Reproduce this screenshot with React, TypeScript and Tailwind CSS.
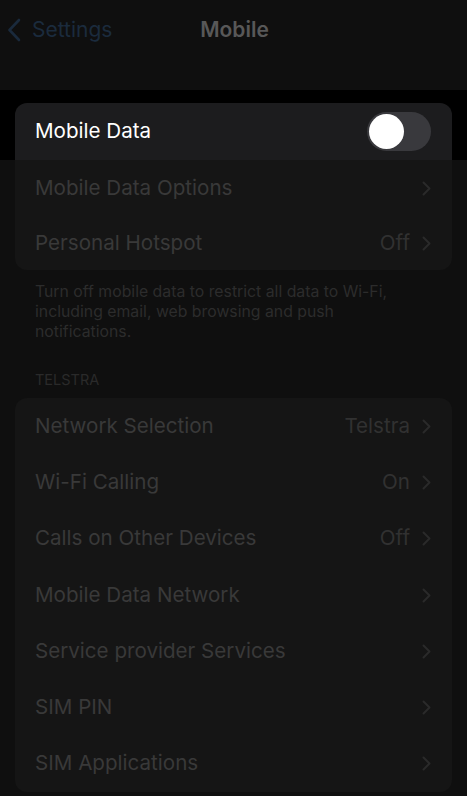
import React from "react";

const font = { fontFamily: 'Inter, "Noto Sans", "Liberation Sans", sans-serif' };

function Chevron({ color = "#2a2a2a" }: { color?: string }) {
  return (
    <svg width="9" height="15" viewBox="0 0 9 15" fill="none">
      <path d="M1.5 1.5 L7.5 7.5 L1.5 13.5" stroke={color} strokeWidth="2" strokeLinecap="round" strokeLinejoin="round" />
    </svg>
  );
}

function Row({ title, value }: { title: string; value?: string }) {
  return (
    <div className="flex h-[56.3px] items-center pl-[20px] pr-[21px]">
      <span className="flex-1 text-[20.6px] text-[#393939]">{title}</span>
      {value && <span className="mr-[12px] text-[20.6px] text-[#313131]">{value}</span>}
      <Chevron />
    </div>
  );
}

export default function App() {
  return (
    <div className="min-h-screen bg-[#0f0f0f]" style={font}>
      <header className="relative flex h-[90px] items-start bg-[#0f0f0f]">
        <div className="flex h-[60px] items-center pl-[7px]">
          <svg width="14" height="24" viewBox="0 0 14 24" fill="none">
            <path d="M12 2 L2.5 12 L12 22" stroke="#1a2a3c" strokeWidth="2.6" strokeLinecap="round" strokeLinejoin="round" />
          </svg>
          <span className="ml-[11px] text-[21px] text-[#1b2b3d]">Settings</span>
        </div>
        <div className="absolute left-0 right-0 top-0 flex h-[60px] items-center justify-center">
          <span className="ml-[2px] text-[21px] font-semibold text-[#585858]">Mobile</span>
        </div>
      </header>
      <div className="bg-black px-[15px] pt-[13px]">
        <div className="flex h-[57px] items-center justify-between rounded-t-[12px] bg-[#1c1c1e] pl-[20px] pr-[21px]">
          <span className="text-[20.6px] text-white">Mobile Data</span>
          <div className="flex h-[39px] w-[64px] items-center rounded-full bg-[#39393d] p-[2px]">
            <div className="h-[35px] w-[35px] rounded-full bg-white" />
          </div>
        </div>
      </div>
      <div className="px-[15px]">
        <div className="rounded-b-[12px] bg-[#151515]">
          <div className="flex h-[56px] items-center pl-[20px] pr-[21px]">
            <span className="flex-1 text-[20.6px] text-[#393939]">Mobile Data Options</span>
            <Chevron />
          </div>
          <div className="flex h-[54px] items-center pl-[20px] pr-[21px]">
            <span className="flex-1 text-[20.6px] text-[#393939]">Personal Hotspot</span>
            <span className="mr-[12px] text-[20.6px] text-[#313131]">Off</span>
            <Chevron />
          </div>
        </div>
        <p className="px-[20px] pt-[12px] text-[15.8px] leading-[20px] text-[#2c2c2c]">
          Turn off mobile data to restrict all data to Wi-Fi, including email, web browsing and push notifications.
        </p>
        <div className="px-[20px] pt-[28px] text-[14.5px] leading-[20px] text-[#2a2a2a]">TELSTRA</div>
        <div className="mt-[8px] rounded-[12px] bg-[#151515]">
          <Row title="Network Selection" value="Telstra" />
          <Row title="Wi-Fi Calling" value="On" />
          <Row title="Calls on Other Devices" value="Off" />
          <Row title="Mobile Data Network" />
          <Row title="Service provider Services" />
          <Row title="SIM PIN" />
          <Row title="SIM Applications" />
        </div>
      </div>
    </div>
  );
}
